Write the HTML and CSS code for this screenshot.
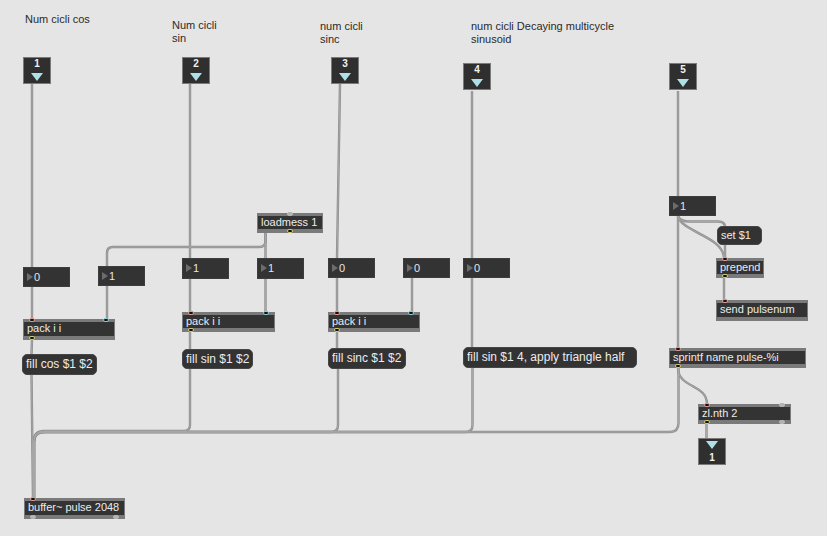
FILE: index.html
```html
<!DOCTYPE html>
<html>
<head>
<meta charset="utf-8">
<title>pulse patcher</title>
<link rel="stylesheet" href="styles.css">
</head>
<body>
<div class="patcher">
  <svg class="cords" width="827" height="536" viewBox="0 0 827 536">
    <defs>
      <path id="k1" d="M32 84 V267"/>
      <path id="k2" d="M32 287 V319"/>
      <path id="k3" d="M32 340 L31.5 354"/>
      <path id="k4" d="M31.5 375 L33 498"/>
      <path id="k5" d="M265.5 233 V241 Q265.5 247 259.5 247 H113 Q107 247 107 253 V266"/>
      <path id="k6" d="M265.5 233 V258"/>
      <path id="k7" d="M107 286 V319"/>
      <path id="k8" d="M190 84 V258"/>
      <path id="k9" d="M190 279 V312"/>
      <path id="k10" d="M265.5 279 V312"/>
      <path id="k11" d="M190 332 V349"/>
      <path id="k12" d="M190 369 V425 Q190 431 184 431 H44 Q34 431 34 441 V498"/>
      <path id="k13" d="M340 84 L337 258"/>
      <path id="k14" d="M337 278 V312"/>
      <path id="k15" d="M412 278 V312"/>
      <path id="k16" d="M337 332 V348"/>
      <path id="k17" d="M338 369 V425 Q338 432 331 432 H44 Q34 432 34 442 V498"/>
      <path id="k18" d="M472 91 V258"/>
      <path id="k19" d="M472 278 V347"/>
      <path id="k20" d="M472.5 368 V425 Q472.5 432 465.5 432 H44 Q34 432 34 442 V498"/>
      <path id="k21" d="M678 91 V196"/>
      <path id="k22" d="M678 216 V348"/>
      <path id="k23" d="M678 216 Q680 221.5 690 221.5 H718 Q725 221.5 725 227"/>
      <path id="k24" d="M678 216 C681 232 723 236 724 258"/>
      <path id="k25" d="M725 245 V258"/>
      <path id="k26" d="M724 278 V300"/>
      <path id="k27" d="M678 368 C678 388 707 384 707 404"/>
      <path id="k28" d="M678.5 368 V423 Q678.5 432 670 432 H44 Q34 432 34 442 V498"/>
      <path id="k29" d="M706.5 424 V438"/>
    </defs>
    <g class="cord-outer">
      <use href="#k1"/><use href="#k2"/><use href="#k3"/><use href="#k4"/><use href="#k5"/>
      <use href="#k6"/><use href="#k7"/><use href="#k8"/><use href="#k9"/><use href="#k10"/>
      <use href="#k11"/><use href="#k12"/><use href="#k13"/><use href="#k14"/><use href="#k15"/>
      <use href="#k16"/><use href="#k17"/><use href="#k18"/><use href="#k19"/><use href="#k20"/>
      <use href="#k21"/><use href="#k22"/><use href="#k23"/><use href="#k24"/><use href="#k25"/>
      <use href="#k26"/><use href="#k27"/><use href="#k28"/><use href="#k29"/>
    </g>
    <g class="cord-inner">
      <use href="#k1"/><use href="#k2"/><use href="#k3"/><use href="#k4"/><use href="#k5"/>
      <use href="#k6"/><use href="#k7"/><use href="#k8"/><use href="#k9"/><use href="#k10"/>
      <use href="#k11"/><use href="#k12"/><use href="#k13"/><use href="#k14"/><use href="#k15"/>
      <use href="#k16"/><use href="#k17"/><use href="#k18"/><use href="#k19"/><use href="#k20"/>
      <use href="#k21"/><use href="#k22"/><use href="#k23"/><use href="#k24"/><use href="#k25"/>
      <use href="#k26"/><use href="#k27"/><use href="#k28"/><use href="#k29"/>
    </g>
  </svg>

  <div class="comment cm1">Num cicli cos</div>
  <div class="comment cm2">Num cicli<br>sin</div>
  <div class="comment cm3">num cicli<br>sinc</div>
  <div class="comment cm4">num cicli Decaying multicycle<br>sinusoid</div>

  <div class="node inlet in1"><span class="io-num">1</span><span class="io-tri"></span></div>
  <div class="node inlet in2"><span class="io-num">2</span><span class="io-tri"></span></div>
  <div class="node inlet in3"><span class="io-num">3</span><span class="io-tri"></span></div>
  <div class="node inlet in4"><span class="io-num">4</span><span class="io-tri"></span></div>
  <div class="node inlet in5"><span class="io-num">5</span><span class="io-tri"></span></div>

  <div class="node numbox nb1"><span class="nb-arrow"></span>0</div>
  <div class="node numbox nb2"><span class="nb-arrow"></span>1</div>
  <div class="node numbox nb3"><span class="nb-arrow"></span>1</div>
  <div class="node numbox nb4"><span class="nb-arrow"></span>1</div>
  <div class="node numbox nb5"><span class="nb-arrow"></span>0</div>
  <div class="node numbox nb6"><span class="nb-arrow"></span>0</div>
  <div class="node numbox nb7"><span class="nb-arrow"></span>0</div>
  <div class="node numbox nb8"><span class="nb-arrow"></span>1</div>

  <div class="node obj o-load"><span class="port free pt-c"></span>loadmess 1<span class="port out pb-c"></span></div>
  <div class="node obj o-pack1"><span class="port hot pt-l"></span><span class="port cold pt-r"></span>pack i i<span class="port out pb-l"></span></div>
  <div class="node obj o-pack2"><span class="port hot pt-l"></span><span class="port cold pt-r"></span>pack i i<span class="port out pb-l"></span></div>
  <div class="node obj o-pack3"><span class="port hot pt-l"></span><span class="port cold pt-r"></span>pack i i<span class="port out pb-l"></span></div>
  <div class="node obj o-prepend"><span class="port hot pt-l"></span>prepend<span class="port out pb-l"></span></div>
  <div class="node obj o-send"><span class="port hot pt-l"></span>send pulsenum</div>
  <div class="node obj o-sprintf"><span class="port hot pt-l"></span>sprintf name pulse-%i<span class="port out pb-l"></span></div>
  <div class="node obj o-zl"><span class="port hot pt-l"></span><span class="port free pt-r"></span>zl.nth 2<span class="port out pb-l"></span><span class="port free pb-r"></span></div>
  <div class="node obj o-buffer"><span class="port hot pt-l"></span>buffer~ pulse 2048<span class="port free pb-l"></span><span class="port free pb-r"></span></div>

  <div class="node msg m1">fill cos $1 $2</div>
  <div class="node msg m2">fill sin $1 $2</div>
  <div class="node msg m3">fill sinc $1 $2</div>
  <div class="node msg m4">fill sin $1 4, apply triangle half</div>
  <div class="node msg m5">set $1</div>

  <div class="node outlet out1"><span class="io-tri"></span><span class="io-num">1</span></div>
</div>
</body>
</html>
```

FILE: styles.css
```css
html, body {
  margin: 0;
  padding: 0;
  background: #e5e5e5;
}

.patcher {
  position: relative;
  width: 827px;
  height: 536px;
  overflow: hidden;
  background: #e5e5e5;
  font-family: "Liberation Sans", Arial, sans-serif;
}

.cords {
  position: absolute;
  left: 0;
  top: 0;
}

.cord-outer use {
  fill: none;
  stroke: #8e8e8e;
  stroke-width: 2.4;
}

.cord-inner use {
  fill: none;
  stroke: #a8a8a8;
  stroke-width: 1;
}

/* comments */
.comment {
  position: absolute;
  font-size: 11px;
  line-height: 13px;
  color: #2a2a2a;
  white-space: nowrap;
}
.cm1 { left: 25px; top: 13px; }
.cm2 { left: 172px; top: 19px; }
.cm3 { left: 320px; top: 20px; }
.cm4 { left: 471px; top: 20px; }

.node {
  position: absolute;
  box-sizing: border-box;
  white-space: nowrap;
}

/* inlet / outlet boxes */
.inlet, .outlet {
  width: 28px;
  height: 27px;
  background: #2f2f2f;
  border: 1px solid #7a7a7a;
  display: flex;
  flex-direction: column;
  align-items: center;
}
.io-num {
  color: #f2f2f2;
  font-weight: bold;
  font-size: 10px;
  line-height: 11px;
}
.io-tri {
  width: 0;
  height: 0;
  border-left: 6px solid transparent;
  border-right: 6px solid transparent;
  border-top: 8px solid #aee0e6;
}
.inlet .io-num { margin-top: 0; }
.inlet .io-tri { margin-top: 4px; }
.outlet .io-tri { margin-top: 2px; }
.outlet .io-num { margin-top: 3px; }

.in1 { left: 23px; top: 57px; }
.in2 { left: 182px; top: 57px; }
.in3 { left: 331px; top: 57px; }
.in4 { left: 463px; top: 63px; }
.in5 { left: 669px; top: 63px; }
.out1 { left: 698px; top: 438px; }

/* number boxes */
.numbox {
  width: 47px;
  height: 20px;
  background: #333333;
  border: 1px solid #3d3d3d;
  color: #e6e6e6;
  font-size: 11px;
  line-height: 13px;
  padding: 3px 0 0 10px;
  display: flex;
  align-items: flex-start;
  gap: 1px;
}
.nb-arrow {
  width: 0;
  height: 0;
  margin: 2px 0 0 -7px;
  border-top: 4px solid transparent;
  border-bottom: 4px solid transparent;
  border-left: 6px solid #6c6c6c;
}
.nb1 { left: 23px; top: 267px; }
.nb2 { left: 98px; top: 266px; }
.nb3 { left: 182px; top: 258px; height: 21px; }
.nb4 { left: 257px; top: 258px; height: 21px; }
.nb5 { left: 328px; top: 258px; }
.nb6 { left: 403px; top: 258px; }
.nb7 { left: 463px; top: 258px; }
.nb8 { left: 669px; top: 196px; }

/* object boxes */
.obj {
  height: 20px;
  background: #333333;
  border-style: solid;
  border-color: #7a7a7a;
  border-width: 3px 1px 4px 1px;
  color: #ececec;
  font-size: 11px;
  line-height: 13px;
  padding-left: 3px;
}
.port {
  position: absolute;
  width: 4px;
  height: 2px;
  border-radius: 3px;
  border: 1px solid #aaaaaa;
  background: #111;
}
.port.hot { border-color: #e59890; }
.port.cold { border-color: #86cdd6; }
.port.out { border-color: #cccc6c; }
.port.free { background: #b4b4b4; border-color: #b4b4b4; }
.pt-l { top: -4px; left: 5px; }
.pt-r { top: -4px; right: 5px; }
.pt-c { top: -4px; left: calc(50% - 3px); }
.pb-l { bottom: -4px; left: 5px; }
.pb-r { bottom: -4px; right: 5px; }
.pb-c { bottom: -4px; left: calc(50% - 3px); }

.o-load { left: 257px; top: 213px; width: 66px; }
.o-pack1 { left: 23px; top: 319px; width: 92px; height: 21px; }
.o-pack2 { left: 182px; top: 312px; width: 93px; }
.o-pack3 { left: 328px; top: 312px; width: 92px; }
.o-prepend { left: 716px; top: 258px; width: 48px; }
.o-send { left: 716px; top: 300px; width: 92px; height: 21px; }
.o-sprintf { left: 669px; top: 348px; width: 137px; }
.o-zl { left: 698px; top: 404px; width: 93px; }
.o-buffer { left: 24px; top: 498px; width: 101px; height: 21px; }

/* message boxes */
.msg {
  height: 21px;
  background: #333333;
  border: 1px solid #464646;
  border-radius: 5px;
  color: #ececec;
  font-size: 12px;
  line-height: 14px;
  padding: 2px 0 0 3px;
}
.m1 { left: 22px; top: 354px; width: 75px; }
.m2 { left: 182px; top: 349px; width: 71px; height: 20px; }
.m3 { left: 328px; top: 348px; width: 78px; }
.m4 { left: 463px; top: 347px; width: 174px; }
.m5 { left: 717px; top: 226px; width: 45px; height: 19px; font-size: 11px; line-height: 13px; padding-top: 2px; }
```
